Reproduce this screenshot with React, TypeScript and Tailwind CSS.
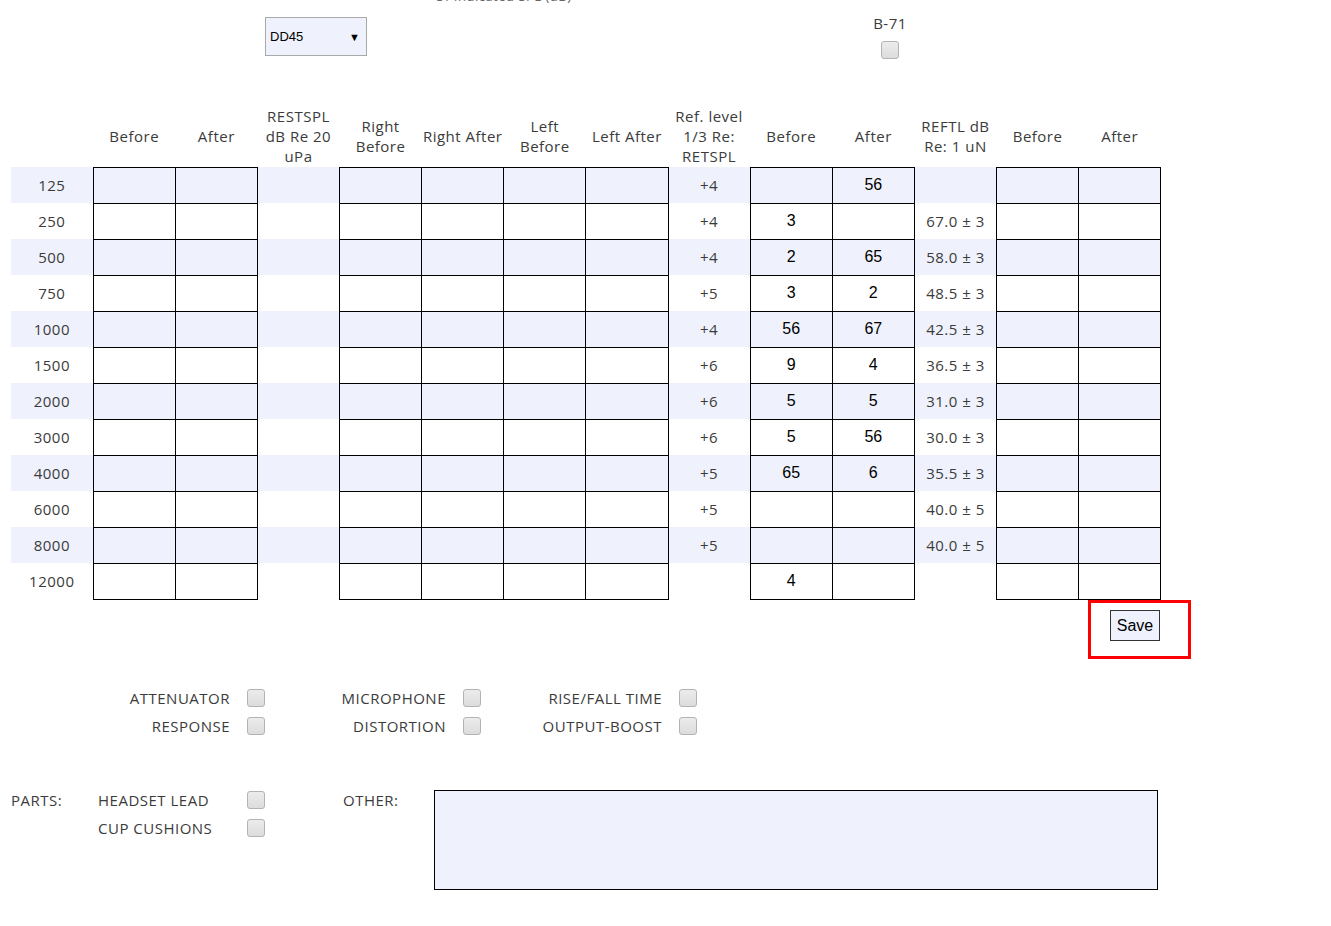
import React from "react";

type Row = { f: string; ref: string; b: string; a: string; reftl: string };

const rows: Row[] = [
  { f: "125", ref: "+4", b: "", a: "56", reftl: "" },
  { f: "250", ref: "+4", b: "3", a: "", reftl: "67.0 ± 3" },
  { f: "500", ref: "+4", b: "2", a: "65", reftl: "58.0 ± 3" },
  { f: "750", ref: "+5", b: "3", a: "2", reftl: "48.5 ± 3" },
  { f: "1000", ref: "+4", b: "56", a: "67", reftl: "42.5 ± 3" },
  { f: "1500", ref: "+6", b: "9", a: "4", reftl: "36.5 ± 3" },
  { f: "2000", ref: "+6", b: "5", a: "5", reftl: "31.0 ± 3" },
  { f: "3000", ref: "+6", b: "5", a: "56", reftl: "30.0 ± 3" },
  { f: "4000", ref: "+5", b: "65", a: "6", reftl: "35.5 ± 3" },
  { f: "6000", ref: "+5", b: "", a: "", reftl: "40.0 ± 5" },
  { f: "8000", ref: "+5", b: "", a: "", reftl: "40.0 ± 5" },
  { f: "12000", ref: "", b: "4", a: "", reftl: "" },
];

const headers: string[][] = [
  [],
  ["Before"],
  ["After"],
  ["RESTSPL", "dB Re 20", "uPa"],
  ["Right", "Before"],
  ["Right After"],
  ["Left", "Before"],
  ["Left After"],
  ["Ref. level", "1/3 Re:", "RETSPL"],
  ["Before"],
  ["After"],
  ["REFTL dB", "Re: 1 uN"],
  ["Before"],
  ["After"],
];

function Check() {
  return (
    <div className="w-[18px] h-[18px] shrink-0 rounded-[3px] border border-[#b3b3b3] bg-gradient-to-b from-[#ececec] to-[#dcdcdc]" />
  );
}

function Bordered({ children }: { children?: React.ReactNode }) {
  return (
    <td className="border border-black text-center align-middle p-0 font-['Liberation_Sans',Arial,sans-serif] tracking-normal text-[16px] text-black">
      {children}
    </td>
  );
}

function Plain({ children }: { children?: React.ReactNode }) {
  return <td className="text-center align-middle p-0">{children}</td>;
}

export default function App() {
  return (
    <div className="w-[1331px] h-[926px] bg-white text-[#3b3b3b] text-[15px] leading-[20px] tracking-[0.5px] font-['Open_Sans','Noto_Sans',sans-serif] overflow-hidden">
      {/* clipped title */}
      <div className="h-[5px] overflow-hidden">
        <div className="ml-[423px] w-[160px] text-center text-[13px] leading-[16px] -mt-[12px] text-[#666]">
          Of Indicated SPL (dB)
        </div>
      </div>

      {/* select + B-71 */}
      <div className="flex items-start h-[39px] mt-[12px]">
        <div className="ml-[265px] w-[102px] h-[39px] border border-[#a9a9a9] bg-[#eff2fd] flex items-center justify-between pl-[4px] pr-[6px] font-['Liberation_Sans',Arial,sans-serif] tracking-normal text-[13px] text-black">
          <span>DD45</span>
          <span className="text-[11px]">▼</span>
        </div>
        <div className="ml-[506px] -mt-[4px] flex flex-col items-center w-[34px]">
          <div className="leading-[20px]">B-71</div>
          <div className="mt-[8px]">
            <Check />
          </div>
        </div>
      </div>

      {/* table */}
      <table className="ml-[11px] mt-[49px] table-fixed border-collapse w-[1150px]">
        <colgroup>
          {headers.map((_, i) => (
            <col key={i} className="w-[82.14px]" />
          ))}
        </colgroup>
        <thead>
          <tr className="h-[62px]">
            {headers.map((h, i) => (
              <th key={i} className="font-normal text-center align-middle p-0 leading-[20px] whitespace-nowrap">
                {h.map((line, j) => (
                  <div key={j}>{line}</div>
                ))}
              </th>
            ))}
          </tr>
        </thead>
        <tbody>
          {rows.map((r, i) => (
            <tr key={r.f} className={`h-[36px] ${i % 2 === 0 ? "bg-[#eff2fd]" : "bg-white"}`}>
              <Plain>{r.f}</Plain>
              <Bordered />
              <Bordered />
              <Plain />
              <Bordered />
              <Bordered />
              <Bordered />
              <Bordered />
              <Plain>{r.ref}</Plain>
              <Bordered>{r.b}</Bordered>
              <Bordered>{r.a}</Bordered>
              <Plain>{r.reftl}</Plain>
              <Bordered />
              <Bordered />
            </tr>
          ))}
        </tbody>
      </table>

      {/* save */}
      <div className="ml-[1088px] w-[103px] h-[59px] border-[3px] border-[#ff0000] pl-[19px] pt-[7px]">
        <button className="w-[50px] h-[31px] border border-[#333] bg-[#eff2fd] text-black text-[16px] tracking-normal font-['Liberation_Sans',Arial,sans-serif] leading-[29px]">
          Save
        </button>
      </div>

      {/* options */}
      <div className="ml-[50px] mt-[25px] grid grid-cols-[216px_216px_216px] uppercase">
        {[
          "ATTENUATOR",
          "MICROPHONE",
          "RISE/FALL TIME",
          "RESPONSE",
          "DISTORTION",
          "OUTPUT-BOOST",
        ].map((t) => (
          <div key={t} className="h-[28px] flex items-center justify-end gap-[17px] pr-[1px]">
            <span>{t}</span>
            <Check />
          </div>
        ))}
      </div>

      {/* parts */}
      <div className="flex mt-[46px]">
        <div className="ml-[11px] w-[87px] h-[28px] flex items-center">PARTS:</div>
        <div className="flex flex-col">
          {["HEADSET LEAD", "CUP CUSHIONS"].map((t) => (
            <div key={t} className="h-[28px] flex items-center">
              <span className="w-[149px]">{t}</span>
              <Check />
            </div>
          ))}
        </div>
        <div className="ml-[78px] w-[91px] h-[28px] flex items-center">OTHER:</div>
        <div className="mt-[4px] w-[724px] h-[100px] border border-black bg-[#eff2fd]" />
      </div>
    </div>
  );
}
